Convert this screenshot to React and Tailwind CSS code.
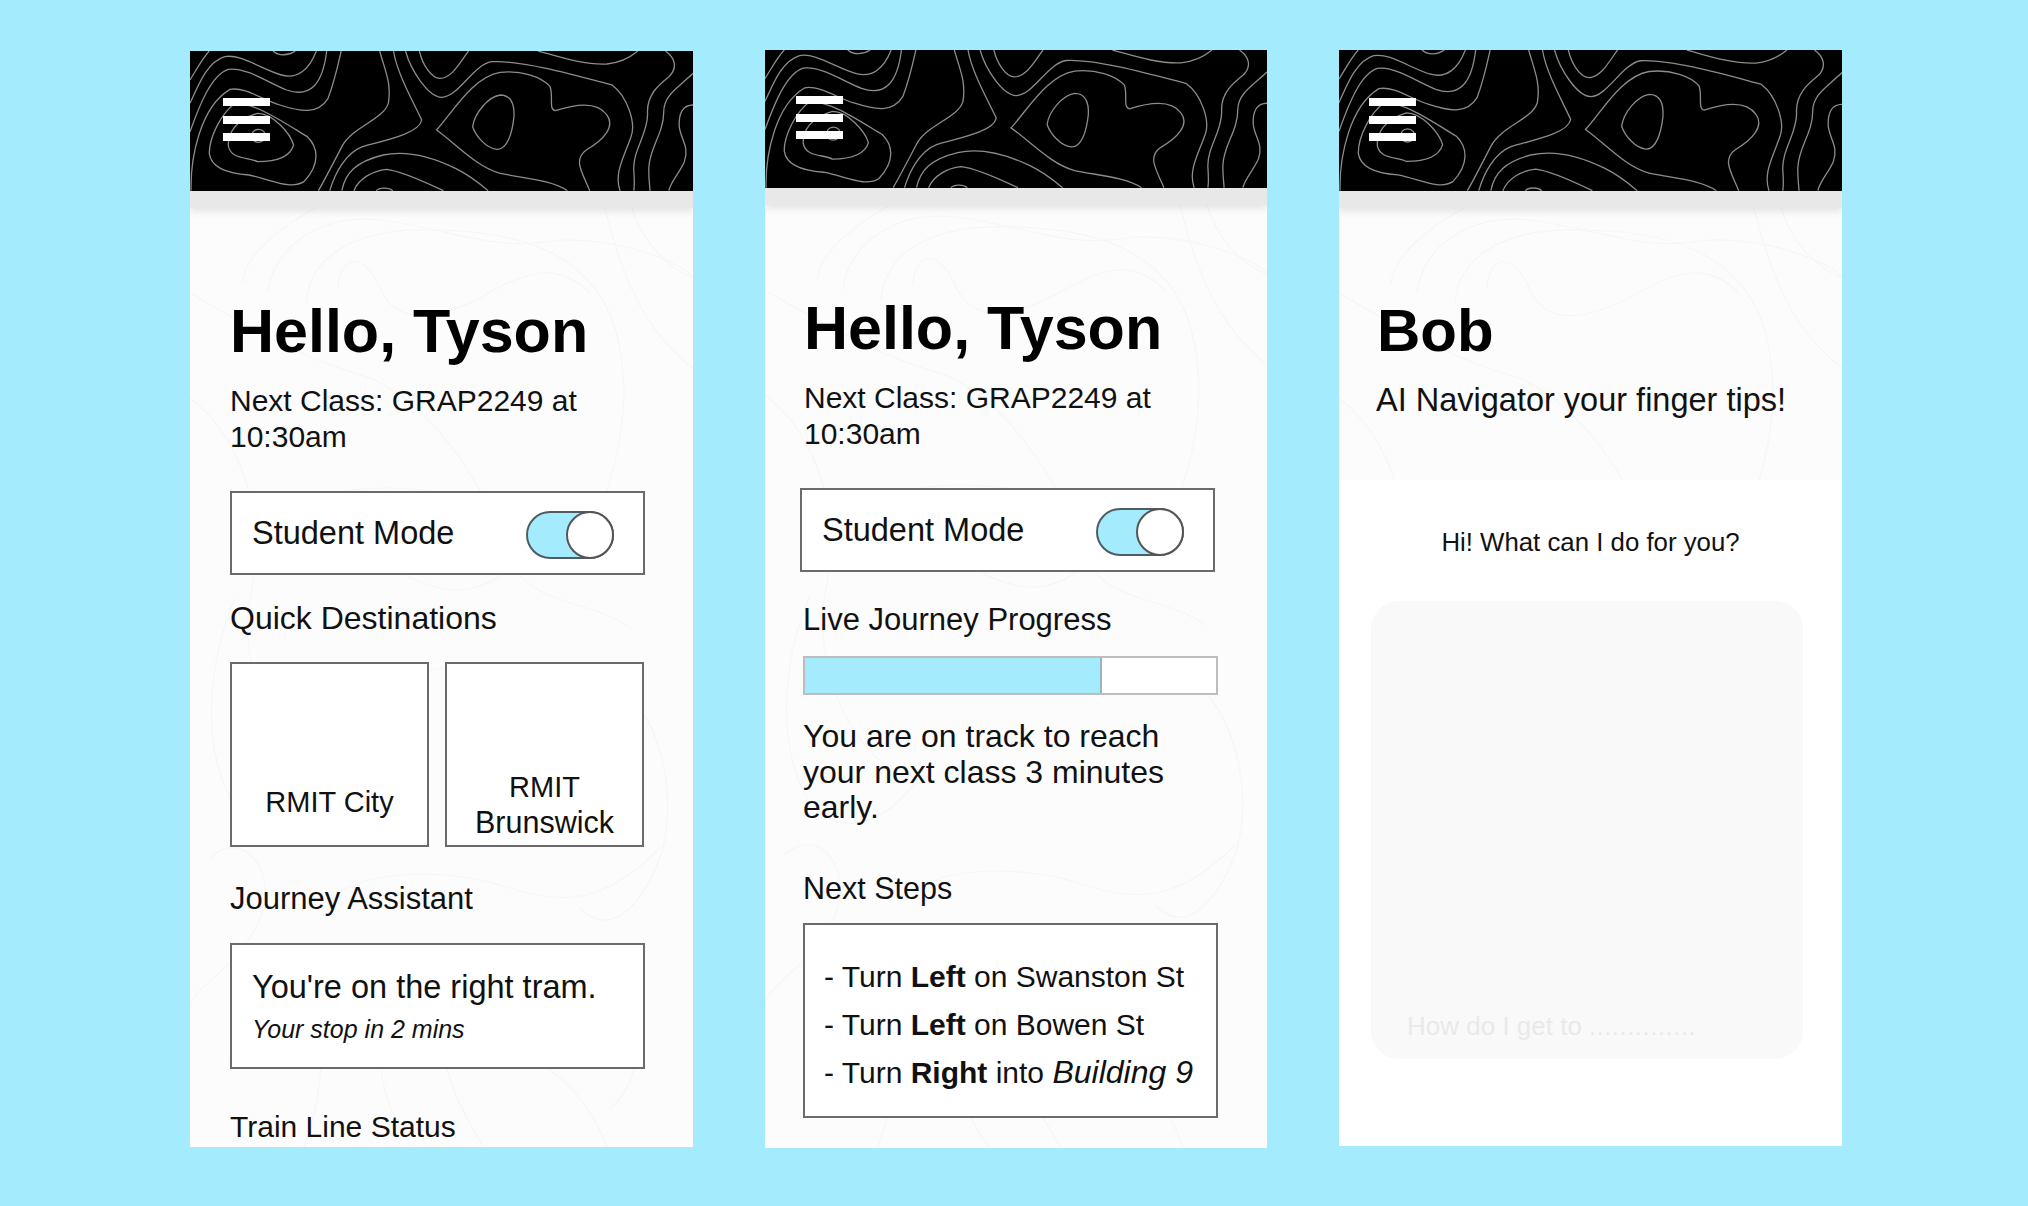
import React from 'react';

// contour lines of the header, in a 1461x420 box
const headerLines = [
  'M29,120 C50,85 65,55 85,33',
  'M29,190 C55,130 80,65 130,50 C175,40 240,90 295,105 C340,118 375,90 396,33',
  'M29,275 C55,200 90,105 140,88 C190,80 260,130 310,150 C380,175 415,130 426,33',
  'M32,452 C30,350 60,200 145,148 C190,140 240,180 290,195 C350,215 400,225 430,175 C450,120 460,70 468,33',
  'M85,340 C85,290 120,220 160,190 C220,190 290,240 370,290 C400,320 410,370 360,425 C320,450 270,420 200,405 C130,400 90,380 85,340 Z',
  'M140,315 C140,280 160,240 225,220 C270,220 320,280 330,315 C320,350 280,365 225,365 C200,350 145,360 140,315 Z',
  'M228,268 C242,268 250,280 248,292 C240,312 215,312 208,292 C206,280 215,268 228,268 Z',
  'M270,33 C285,48 315,48 335,33',
  'M580,33 C595,90 615,130 605,190 C590,240 500,260 470,320 C450,360 420,420 402,452',
  'M620,33 C630,100 680,190 702,240 C695,280 600,300 530,320 C480,340 450,400 435,452',
  'M695,33 C705,75 730,115 755,115 C790,115 815,65 838,33',
  'M655,33 C670,90 720,170 760,172 C810,170 850,75 905,65 C1000,60 1180,115 1255,135 C1300,170 1325,250 1310,290 C1290,350 1260,400 1278,452',
  'M1125,452 C1080,420 1000,415 930,400 C860,380 800,310 745,270 C790,220 850,110 930,97 C990,90 1050,110 1075,140 C1085,170 1070,210 1090,212 C1140,195 1210,180 1240,225 C1265,260 1230,300 1180,330 C1140,360 1170,400 1190,452',
  'M930,165 C960,165 972,190 970,230 C965,280 950,330 920,328 C890,325 860,290 850,260 C855,220 895,170 930,165 Z',
  'M1040,33 C1100,50 1170,75 1240,72 C1280,68 1310,50 1330,33',
  'M1410,33 C1440,55 1445,85 1420,110 C1390,135 1355,165 1358,220 C1360,280 1315,330 1318,390 C1320,420 1320,440 1318,452',
  'M1490,100 C1450,140 1405,165 1405,215 C1405,280 1365,320 1362,380 C1360,410 1365,440 1365,452',
  'M1490,195 C1460,195 1448,220 1450,260 C1455,300 1480,320 1465,365 C1450,400 1425,425 1420,452',
  'M470,452 C480,400 510,365 590,345 C660,330 730,350 800,385 C840,405 870,430 895,452',
  'M505,452 C520,415 560,392 600,388 C640,392 710,425 765,452',
  'M570,452 C578,443 605,440 618,452',
];

// very faint contour lines of the page behind the cards
const bodyLines = [
  'M52,75 C56,45 90,20 125,0',
  'M78,85 C82,40 130,5 190,12 C260,20 300,45 370,32 C440,30 500,60 503,70',
  'M116,95 C120,45 170,20 240,22 C320,22 400,40 425,120 C445,190 430,260 395,340',
  'M148,80 C150,45 175,45 190,80 C205,115 240,115 290,90 C340,60 370,55 400,85',
  'M415,0 C430,60 450,120 503,160',
  'M442,0 C455,40 480,60 503,70',
  'M0,85 C60,120 110,150 180,170 C250,200 300,290 320,350 C340,400 400,390 440,420',
  'M0,190 C40,220 80,290 60,390 C50,440 70,520 120,560',
  'M130,290 C180,270 300,280 330,320 C340,360 290,390 250,380 C200,370 190,340 130,290 Z',
  'M45,390 C20,450 10,530 40,590 C70,640 130,620 160,560',
  'M420,470 C470,500 490,590 470,650 C450,700 420,730 390,700',
  'M200,470 C270,450 360,460 420,470',
  'M20,650 C50,620 90,660 70,710 C50,760 0,780 0,800',
  'M140,690 C180,660 260,660 320,680 C380,700 420,690 470,640',
  'M300,780 C320,730 400,730 430,770 C460,810 450,880 420,900',
  'M40,860 C40,800 80,780 120,800 C140,840 130,900 110,950',
  'M200,800 C180,840 190,900 230,950',
  'M260,800 C240,850 270,900 300,950',
  'M340,850 C380,870 410,910 420,950',
];

const HeaderTexture = () => (
  <svg className="absolute inset-0 w-full h-full" viewBox="29 33 1461 420" preserveAspectRatio="none" fill="none">
    {headerLines.map((d) => (
      <path key={d} d={d} stroke="#8c8c8c" strokeWidth="1.3" vectorEffect="non-scaling-stroke" />
    ))}
  </svg>
);

const BodyTexture = () => (
  <svg className="absolute left-0 top-0 w-[503px] h-[950px]" viewBox="0 0 503 950" fill="none">
    {bodyLines.map((d) => (
      <path key={d} d={d} stroke="#f6f6f6" strokeWidth="1.2" />
    ))}
  </svg>
);

const Header = ({ blackClass, menuClass }) => (
  <div className="relative z-10 shrink-0">
    <div className={`relative bg-black overflow-hidden ${blackClass}`}>
      <HeaderTexture />
      <div className={`relative flex flex-col gap-[9.5px] ${menuClass}`}>
        <div className="w-[47px] h-2 bg-white" />
        <div className="w-[47px] h-2 bg-white" />
        <div className="w-[47px] h-2 bg-white" />
      </div>
    </div>
    <div className="h-[17px] bg-[#e8e8e8] shadow-[0_4px_7px_rgba(0,0,0,0.09)]" />
  </div>
);

const StudentMode = ({ className }) => (
  <div className={`relative flex items-center justify-between h-[84px] w-[415px] bg-white border-2 border-[#6b6b6b] pl-[20px] pr-[29px] ${className}`}>
    <span className="text-[32.5px] leading-[36px] pb-px">Student Mode</span>
    <div className="relative mt-1 w-[88px] h-[48px] rounded-full bg-[#a4ebfe] border-2 border-[#4d5d62]">
      <div className="absolute -right-0.5 -top-0.5 w-[48px] h-[48px] rounded-full bg-white border-2 border-[#555]" />
    </div>
  </div>
);

const Greeting = ({ className }) => (
  <div className={className}>
    <h1 className="text-[61px] leading-[60px] font-bold text-black">Hello, Tyson</h1>
    <p className="mt-[22px] text-[30px] leading-[36px] w-[400px]">Next Class: GRAP2249 at 10:30am</p>
  </div>
);

const DestCard = ({ children, className }) => (
  <div className={`flex items-end justify-center text-center w-[199px] h-[185px] bg-white border-2 border-[#6b6b6b] text-[29px] leading-[35px] ${className}`}>
    <div>{children}</div>
  </div>
);

const HomePanel = () => (
  <div className="relative flex flex-col w-[503px] h-[1096px] mt-px overflow-hidden bg-[#fcfcfc]">
    <Header blackClass="h-[140px]" menuClass="pt-[47px] pl-[33px]" />
    <div className="relative flex-1 overflow-hidden pt-[93px]">
      <BodyTexture />
      <div className="relative pl-[40px]">
        <Greeting />
        <StudentMode className="mt-[36px]" />
        <div className="mt-[25px] text-[32px] leading-[36px]">Quick Destinations</div>
        <div className="mt-[26px] flex gap-[16px]">
          <DestCard className="pb-[25px]">RMIT City</DestCard>
          <DestCard className="pb-[4px]">RMIT<br /><span className="text-[30.5px]">Brunswick</span></DestCard>
        </div>
        <div className="mt-[34px] text-[31px] leading-[36px]">Journey Assistant</div>
        <div className="mt-[26px] w-[415px] h-[126px] bg-white border-2 border-[#6b6b6b] pt-[22px] pl-[20px]">
          <div className="text-[32.5px] leading-[40px]">You're on the right tram.</div>
          <div className="mt-[7px] text-[25px] leading-[30px] italic">Your stop in 2 mins</div>
        </div>
        <div className="mt-[40px] text-[30px] leading-[36px]">Train Line Status</div>
      </div>
    </div>
  </div>
);

const JourneyPanel = () => (
  <div className="relative flex flex-col w-[502px] h-[1098px] overflow-hidden bg-[#fcfcfc]">
    <Header blackClass="h-[138px]" menuClass="pt-[46px] pl-[31px]" />
    <div className="relative flex-1 overflow-hidden pt-[93px]">
      <BodyTexture />
      <div className="relative">
        <Greeting className="pl-[39px]" />
        <StudentMode className="mt-[36px] ml-[35px]" />
        <div className="mt-[30px] pl-[38px] text-[31px] leading-[36px]">Live Journey Progress</div>
        <div className="mt-[18px] ml-[38px] w-[415px] h-[39px] bg-white border-2 border-[#bdbdbd]">
          <div className="w-[297px] h-full bg-[#a4ebfe] border-r-2 border-[#9ab4bb]" />
        </div>
        <p className="mt-[24px] pl-[38px] w-[420px] text-[32px] leading-[35.5px]">
          You are on track to reach your next class 3 minutes early.
        </p>
        <div className="mt-[44px] pl-[38px] text-[30.5px] leading-[36px]">Next Steps</div>
        <div className="mt-[17px] ml-[38px] w-[415px] h-[195px] bg-white border-2 border-[#6b6b6b] pt-[28px] pl-[19px] text-[30px] leading-[48px] whitespace-nowrap">
          <div>- Turn <b>Left</b> on Swanston St</div>
          <div>- Turn <b>Left</b> on Bowen St</div>
          <div>- Turn <b>Right</b> into <i className="text-[32px] leading-none">Building 9</i></div>
        </div>
      </div>
    </div>
  </div>
);

const BobPanel = () => (
  <div className="relative flex flex-col w-[503px] h-[1096px] overflow-hidden bg-white">
    <Header blackClass="h-[141px]" menuClass="pt-[48px] pl-[30px]" />
    <div className="relative h-[272px] overflow-hidden bg-[#fcfcfc] pt-[93px] pl-[37px]">
      <BodyTexture />
      <div className="relative">
        <h1 className="pl-px text-[60px] leading-[60px] font-bold text-black">Bob</h1>
        <p className="mt-[21px] text-[32.5px] leading-[36px] whitespace-nowrap">AI Navigator your finger tips!</p>
      </div>
    </div>
    <div className="mt-[47px] text-center text-[25.8px] leading-[30px]">Hi! What can I do for you?</div>
    <div className="mt-[44px] ml-[32px] flex items-end w-[432px] h-[458px] rounded-[28px] bg-[#f9f9f9] pl-[36px] pb-[17px]">
      <span className="text-[26px] leading-[30px] text-[#e9e9e9] whitespace-nowrap">
        How do I get to <span className="text-[24px] tracking-[1px]">..............</span>
      </span>
    </div>
  </div>
);

export default function App() {
  return (
    <div className="flex items-start gap-[72px] h-[1206px] w-[2028px] overflow-hidden bg-[#a4ebfe] pt-[50px] pl-[190px] text-[#111] font-['Liberation_Sans',Arial,sans-serif]">
      <HomePanel />
      <JourneyPanel />
      <BobPanel />
    </div>
  );
}
